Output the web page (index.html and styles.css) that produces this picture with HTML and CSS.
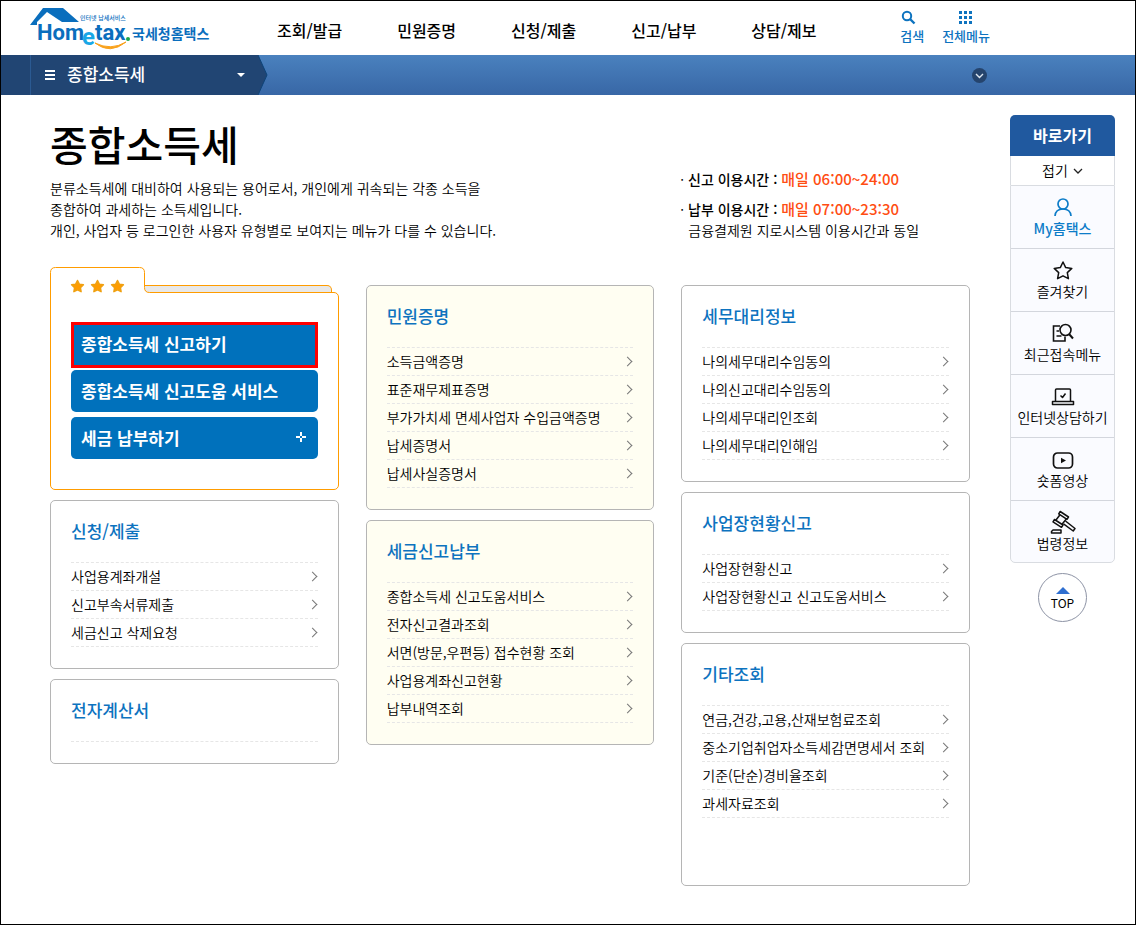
FILE: index.html
```html
<!DOCTYPE html>
<html lang="ko">
<head>
    <meta charset="UTF-8">
    <meta name="viewport" content="width=device-width, initial-scale=1.0">
    <title>국세청홈택스 - 종합소득세</title>
    <link rel="stylesheet" href="styles.css">
</head>
<body>
    <header class="header">
        <a class="logo" href="#" aria-label="Hometax 국세청홈택스">
            <svg width="182" height="46" viewBox="0 0 182 46">
                <path d="M1 18 L14 1 H34 L50 15 H33 L18 5 L8 15 V18 Z" fill="#0a6ebd"/>
                <text class="logo-small" x="51" y="13">인터넷 납세서비스</text>
                <text class="logo-en" x="8" y="33">Hom</text>
                <text class="logo-e" x="53" y="38">e</text>
                <text class="logo-en" x="66" y="33">tax</text>
                <circle cx="99" cy="32" r="2" fill="#1aa64a"/>
                <path d="M66 36 Q81 48 97 35 Q82 44 66 36 Z" fill="#f9a11b" stroke="#f9a11b"/>
                <text class="logo-ko" x="103" y="32">국세청홈택스</text>
            </svg>
        </a>
        <nav class="gnb">
            <a href="#">조회/발급</a>
            <a href="#">민원증명</a>
            <a href="#">신청/제출</a>
            <a href="#">신고/납부</a>
            <a href="#">상담/제보</a>
        </nav>
        <div class="tools">
            <button type="button" class="tool search">
                <svg width="16" height="16" viewBox="0 0 16 16">
                    <circle cx="7" cy="6" r="4.2" fill="none" stroke="#0d73bf" stroke-width="2"/>
                    <path d="M10 9 L14.5 13.5" stroke="#0d73bf" stroke-width="2.4"/>
                </svg>
                검색
            </button>
            <button type="button" class="tool">
                <svg width="16" height="16" viewBox="0 0 16 16" fill="#0d73bf">
                    <path d="M1 1h3v3h-3zM6 1h3v3h-3zM11 1h3v3h-3zM1 6h3v3h-3zM6 6h3v3h-3zM11 6h3v3h-3zM1 11h3v3h-3zM6 11h3v3h-3zM11 11h3v3h-3z"/>
                </svg>
                전체메뉴
            </button>
        </div>
    </header>

    <div class="bar">
        <button type="button" class="bar-menu">
            <svg width="12" height="12" viewBox="0 0 12 12"><path d="M1 2h10M1 6h10M1 10h10" stroke="#fff" stroke-width="2"/></svg>
            <span>종합소득세</span>
            <svg class="caret" width="8" height="4" viewBox="0 0 8 4"><path d="M0 0h8L4 4z" fill="#fff"/></svg>
        </button>
        <svg class="bar-arrow" width="10" height="40" viewBox="0 0 10 40">
            <path d="M0 0 L9 20 L0 40 Z" fill="#214573"/>
            <path d="M0 0 L9 20 L0 40" fill="none" stroke="#0e4478"/>
        </svg>
        <button type="button" class="bar-open" aria-label="펼치기">
            <svg width="15" height="15" viewBox="0 0 15 15">
                <circle cx="7.5" cy="7.5" r="7.5" fill="#25446d"/>
                <path d="M4 6 L7.5 9.5 L11 6" fill="none" stroke="#dfe8f2" stroke-width="1.4"/>
            </svg>
        </button>
    </div>

    <div class="page">
        <main class="main">
            <section class="intro">
                <div class="intro-text">
                    <h1>종합소득세</h1>
                    <p>분류소득세에 대비하여 사용되는 용어로서, 개인에게 귀속되는 각종 소득을<br>
                    종합하여 과세하는 소득세입니다.<br>
                    개인, 사업자 등 로그인한 사용자 유형별로 보여지는 메뉴가 다를 수 있습니다.</p>
                </div>
                <ul class="hours">
                    <li><strong>신고 이용시간 : <em>매일 06:00~24:00</em></strong></li>
                    <li><strong>납부 이용시간 : <em>매일 07:00~23:30</em></strong><br>금융결제원 지로시스템 이용시간과 동일</li>
                </ul>
            </section>

            <div class="columns">
                <div class="column">
                    <section class="folder">
                        <div class="folder-head">
                            <svg width="102" height="26" viewBox="0 0 102 26">
                                <path d="M94 18.5H102V25.5H94z" fill="#e8e8e8"/>
                                <path d="M94.5 18.5H102" stroke="#ff9c00"/>
                                <path d="M0.5 26V5.5Q0.5 0.5 5.5 0.5H89.5Q94.5 0.5 94.5 5.5V20.5Q94.5 25.5 99.5 25.5H102V26z" fill="#fff"/>
                                <path d="M0.5 26V5.5Q0.5 0.5 5.5 0.5H89.5Q94.5 0.5 94.5 5.5V20.5Q94.5 25.5 99.5 25.5H102" fill="none" stroke="#ff9c00"/>
                                <g fill="#ff9c00" stroke="#f0a010" stroke-width="1.5" stroke-linejoin="round">
                                    <path id="star" d="M27.5 13.5l1.8 3.7 4.1.6-3 2.9.7 4-3.6-1.9-3.6 1.9.7-4-3-2.9 4.1-.6z"/>
                                    <use href="#star" x="20"/>
                                    <use href="#star" x="40"/>
                                </g>
                            </svg>
                            <div class="folder-back"></div>
                        </div>
                        <div class="folder-body">
                            <button type="button" class="go current">종합소득세 신고하기</button>
                            <button type="button" class="go">종합소득세 신고도움 서비스</button>
                            <button type="button" class="go">세금 납부하기
                                <svg width="10" height="10" viewBox="0 0 10 10"><path d="M5 0v4M5 6v4M0 5h4M6 5h4" stroke="#fff" stroke-width="2"/></svg>
                            </button>
                        </div>
                    </section>
                    <section class="card">
                        <h2>신청/제출</h2>
                        <ul>
                            <li><a href="#">사업용계좌개설</a></li>
                            <li><a href="#">신고부속서류제출</a></li>
                            <li><a href="#">세금신고 삭제요청</a></li>
                        </ul>
                    </section>
                    <section class="card">
                        <h2>전자계산서</h2>
                        <ul></ul>
                    </section>
                </div>

                <div class="column lower">
                    <section class="card cream">
                        <h2>민원증명</h2>
                        <ul>
                            <li><a href="#">소득금액증명</a></li>
                            <li><a href="#">표준재무제표증명</a></li>
                            <li><a href="#">부가가치세 면세사업자 수입금액증명</a></li>
                            <li><a href="#">납세증명서</a></li>
                            <li><a href="#">납세사실증명서</a></li>
                        </ul>
                    </section>
                    <section class="card cream">
                        <h2>세금신고납부</h2>
                        <ul>
                            <li><a href="#">종합소득세 신고도움서비스</a></li>
                            <li><a href="#">전자신고결과조회</a></li>
                            <li><a href="#">서면(방문,우편등) 접수현황 조회</a></li>
                            <li><a href="#">사업용계좌신고현황</a></li>
                            <li><a href="#">납부내역조회</a></li>
                        </ul>
                    </section>
                </div>

                <div class="column lower">
                    <section class="card">
                        <h2>세무대리정보</h2>
                        <ul>
                            <li><a href="#">나의세무대리수임동의</a></li>
                            <li><a href="#">나의신고대리수임동의</a></li>
                            <li><a href="#">나의세무대리인조회</a></li>
                            <li><a href="#">나의세무대리인해임</a></li>
                        </ul>
                    </section>
                    <section class="card">
                        <h2>사업장현황신고</h2>
                        <ul>
                            <li><a href="#">사업장현황신고</a></li>
                            <li><a href="#">사업장현황신고 신고도움서비스</a></li>
                        </ul>
                    </section>
                    <section class="card tall">
                        <h2>기타조회</h2>
                        <ul>
                            <li><a href="#">연금,건강,고용,산재보험료조회</a></li>
                            <li><a href="#">중소기업취업자소득세감면명세서 조회</a></li>
                            <li><a href="#">기준(단순)경비율조회</a></li>
                            <li><a href="#">과세자료조회</a></li>
                        </ul>
                    </section>
                </div>
            </div>
        </main>

        <aside class="quick">
            <h2>바로가기</h2>
            <button type="button" class="fold">접기
                <svg width="10" height="6" viewBox="0 0 10 6"><path d="M1 1L5 5L9 1" fill="none" stroke="#222" stroke-width="1.3"/></svg>
            </button>
            <nav class="quick-list">
                <a href="#" class="my">
                    <svg width="24" height="24" viewBox="0 0 24 24" fill="none" stroke="#0d7cc8" stroke-width="1.7">
                        <circle cx="12" cy="9" r="5"/>
                        <path d="M4 21Q4.500 14 12 14Q19.500 14 20 21"/>
                    </svg>
                    My홈택스
                </a>
                <a href="#">
                    <svg width="24" height="24" viewBox="0 0 24 24" fill="none" stroke="#111" stroke-width="1.5" stroke-linejoin="round">
                        <path d="M12 4l2.700 5.600 6.100.8-4.500 4.200 1.100 6.100L12 17.800l-5.400 2.900 1.100-6.100L3.200 10.400l6.100-.8z"/>
                    </svg>
                    즐겨찾기
                </a>
                <a href="#">
                    <svg width="24" height="24" viewBox="0 0 24 24" fill="none" stroke="#111" stroke-width="1.6">
                        <path d="M9 5H2.500V20H14V15.500M5.500 10H8M5.500 15H10.500"/>
                        <circle cx="14.500" cy="9" r="5.500"/>
                        <path d="M18 13L22 17.500" stroke-width="2"/>
                    </svg>
                    최근접속메뉴
                </a>
                <a href="#">
                    <svg width="24" height="24" viewBox="0 0 24 24" fill="none" stroke="#111" stroke-width="1.500" stroke-linejoin="round">
                        <path d="M4.500 17V6Q4.500 5 5.500 5H18.500Q19.500 5 19.500 6V17M1.500 17.500H22.500V20.500H1.500z"/>
                        <path d="M9.500 11.500l2 2 3-4"/>
                    </svg>
                    인터넷상담하기
                </a>
                <a href="#">
                    <svg width="24" height="24" viewBox="0 0 24 24" fill="none" stroke="#111" stroke-width="1.700">
                        <rect x="2.500" y="6" width="19" height="15" rx="4"/>
                        <path d="M10 10.800v5.400l5-2.700z" fill="#111" stroke="none"/>
                    </svg>
                    숏폼영상
                </a>
                <a href="#">
                    <svg width="26" height="24" viewBox="0 0 26 24" fill="none" stroke="#111" stroke-width="1.500" stroke-linejoin="round">
                        <path d="M10.200 1.500L18.500 7L17 9.300L8.700 3.800z"/>
                        <path d="M4.500 9.500L13 15L11.500 17.300L3 11.800z"/>
                        <path d="M10 4.800L5.800 10.300M16.300 9L12 14.300"/>
                        <path d="M15.500 11L25 18.500L23.200 21L13.500 13.800"/>
                        <path d="M3 20H11V23H1.500V21.500z"/>
                    </svg>
                    법령정보
                </a>
            </nav>
            <a class="top" href="#">
                <svg width="14" height="7" viewBox="0 0 14 7"><path d="M7 0L14 7H0z" fill="#2f6fd0"/></svg>
                TOP
            </a>
        </aside>
    </div>
</body>
</html>
```
FILE: styles.css
```css
* {
    box-sizing: border-box;
}

body {
    margin: 0;
    min-height: 100vh;
    border: 1px solid #000;
    background: #fff;
    color: #000;
    font-family: "Noto Sans CJK KR", sans-serif;
    font-size: 14px;
    font-weight: 350;
    line-height: 21px;
}

h1, h2, p, ul {
    margin: 0;
    padding: 0;
}

ul {
    list-style: none;
}

a {
    color: inherit;
    text-decoration: none;
}

button {
    margin: 0;
    padding: 0;
    border: 0;
    background: none;
    color: inherit;
    font: inherit;
    cursor: pointer;
}

svg {
    display: block;
    flex: none;
}

/* Top header */
.header {
    display: flex;
    height: 54px;
    padding-left: 28px;
}

.logo {
    width: 248px;
    padding-top: 6px;
}

.logo-small {
    font-size: 6px;
    font-weight: 500;
    fill: #0a6ebd;
}

.logo-en, .logo-e {
    font-family: Roboto, sans-serif;
    font-size: 22px;
    font-weight: 700;
    fill: #0a6ebd;
}

.logo-e {
    font-size: 24px;
    fill: #19a8e6;
}

.logo-ko {
    font-size: 14px;
    font-weight: 700;
    fill: #0a6ebd;
}

.gnb {
    display: flex;
    align-items: center;
    gap: 55px;
    padding-top: 4px;
    font-size: 16px;
    font-weight: 500;
}

.tools {
    display: flex;
    gap: 18px;
    margin-left: auto;
    margin-right: 145px;
    padding-top: 9px;
}

.tool {
    display: flex;
    flex-direction: column;
    align-items: center;
    height: 36px;
    color: #0d73bf;
    font-size: 13px;
    font-weight: 500;
    line-height: 20px;
}

.search {
    align-items: flex-start;
}

/* Blue location bar */
.bar {
    display: flex;
    align-items: center;
    height: 40px;
    background: linear-gradient(#4a81be, #3867a6);
}

.bar-menu {
    display: flex;
    align-items: center;
    width: 257px;
    height: 40px;
    padding: 0 13px 0 14px;
    border-left: 29px solid #214573;
    background: #214573;
    box-shadow: inset 1px 0 #2b5a92;
    color: #fff;
    font-size: 17px;
    font-weight: 500;
}

.bar-menu span {
    margin-left: 11px;
    padding-bottom: 3px;
}

.caret {
    margin-left: auto;
}

.bar-open {
    margin-left: auto;
    margin-right: 148px;
}

/* Page body */
.page {
    display: flex;
    gap: 40px;
    padding: 20px 20px 38px 49px;
}

.main {
    flex: 1;
}

.intro, .columns {
    display: grid;
    grid-template-columns: repeat(3, 1fr);
    column-gap: 27px;
}

.intro {
    margin-bottom: 26px;
}

.intro-text {
    grid-column: span 2;
}

.intro h1 {
    margin-bottom: 7px;
    font-size: 41px;
    font-weight: 500;
    line-height: 56px;
}

.hours {
    align-self: end;
}

.hours li {
    padding-left: 7px;
    text-indent: -8px;
}

.hours li + li {
    margin-top: 9px;
}

.hours li::before {
    content: "· ";
}

.hours strong {
    font-weight: 500;
}

.hours em {
    color: #ff4d12;
    font-size: 15px;
    font-style: normal;
    line-height: 1;
}

.column {
    display: flex;
    flex-direction: column;
    gap: 10px;
    min-width: 0;
}

.lower {
    padding-top: 18px;
}

/* Folder-shaped box */
.folder-head {
    position: relative;
    display: flex;
    align-items: flex-end;
}

.folder-back {
    flex: 1;
    height: 8px;
    margin-right: 7px;
    border: 1px solid #ff9c00;
    border-left: 0;
    border-radius: 0 5px 0 0;
    background: #e8e8e8;
}

.folder-body {
    display: flex;
    flex-direction: column;
    gap: 5px;
    margin-top: -1px;
    padding: 29px 20px 30px;
    border: 1px solid #ff9c00;
    border-radius: 0 5px 5px 5px;
}

.go {
    display: flex;
    align-items: center;
    justify-content: space-between;
    height: 42px;
    padding: 0 12px 2px 10px;
    border-radius: 5px;
    background: #0071bc;
    color: #fff;
    font-size: 17px;
    font-weight: 700;
}

.go.current {
    height: 46px;
    margin-bottom: -3px;
    padding: 0 7px 3px;
    border: 3px solid #f00;
    border-radius: 0;
}

/* Menu cards */
.card {
    padding: 19px 20px 21px;
    border: 1px solid #b5b5b5;
    border-radius: 5px;
}

.cream {
    background: #fffef2;
}

.tall {
    min-height: 243px;
}

.card h2 {
    margin-bottom: 21px;
    color: #0d73bf;
    font-size: 17px;
    font-weight: 500;
    line-height: 21px;
}

.card ul {
    border-top: 1px dashed #e6e6e6;
}

.card li {
    border-bottom: 1px dashed #e6e6e6;
}

.card li a {
    display: flex;
    align-items: center;
    justify-content: space-between;
    height: 27px;
    white-space: nowrap;
}

.card li a::after {
    content: "";
    width: 6px;
    height: 6px;
    margin: 0 2px 1px 0;
    border: solid #777;
    border-width: 1px 1px 0 0;
    transform: rotate(45deg);
}

/* Quick menu */
.quick {
    width: 105px;
}

.quick h2 {
    border-radius: 5px 5px 0 0;
    background: #20599f;
    color: #fff;
    font-size: 16px;
    font-weight: 700;
    line-height: 41px;
    text-align: center;
}

.fold {
    display: flex;
    align-items: center;
    justify-content: center;
    gap: 5px;
    width: 100%;
    height: 29px;
    border: solid #d9dce1;
    border-width: 0 1px;
}

.quick-list {
    border: 1px solid #d9dce1;
    border-radius: 0 0 5px 5px;
    background: #fafbff;
}

.quick-list a {
    display: flex;
    flex-direction: column;
    align-items: center;
    height: 63px;
    padding-top: 9px;
    line-height: 19px;
    white-space: nowrap;
}

.quick-list a + a {
    border-top: 1px solid #d3d6dd;
}

.quick-list .my, .quick-list a:last-child {
    height: 62px;
}

.quick-list .my {
    color: #0d7cc8;
    font-weight: 500;
}

.top {
    display: flex;
    flex-direction: column;
    align-items: center;
    width: 49px;
    height: 49px;
    margin: 10px auto 0;
    padding-top: 13px;
    border: 1px solid #8d93a5;
    border-radius: 50%;
    font-size: 12px;
    font-weight: 400;
    line-height: 18px;
}
```
